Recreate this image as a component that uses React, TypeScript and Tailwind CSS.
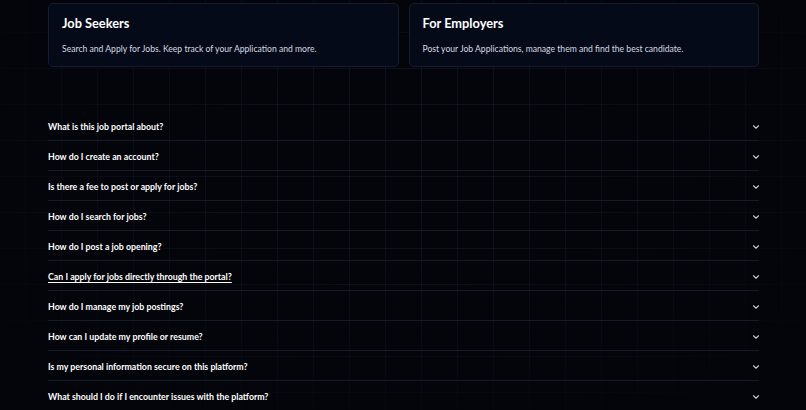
import React from "react";

const faqs = [
  "What is this job portal about?",
  "How do I create an account?",
  "Is there a fee to post or apply for jobs?",
  "How do I search for jobs?",
  "How do I post a job opening?",
  "Can I apply for jobs directly through the portal?",
  "How do I manage my job postings?",
  "How can I update my profile or resume?",
  "Is my personal information secure on this platform?",
  "What should I do if I encounter issues with the platform?",
];

function Chevron() {
  return (
    <svg width="10" height="10" viewBox="0 0 24 24" fill="none" stroke="currentColor" strokeWidth="2.6" strokeLinecap="round" strokeLinejoin="round">
      <path d="m6 9 6 6 6-6" />
    </svg>
  );
}

export default function App() {
  return (
    <div
      className="relative w-[806px] h-[410px] overflow-hidden bg-[#04050b] text-white"
      style={{ fontFamily: 'Lato, "Noto Sans", sans-serif' }}
    >
      {/* grid backdrop */}
      <div className="absolute inset-0 bg-[linear-gradient(to_right,rgba(70,90,140,0.14)_1px,transparent_1px),linear-gradient(to_bottom,rgba(70,90,140,0.14)_1px,transparent_1px)] bg-[size:36px_36px] bg-[position:-11px_-4px]" />
      <div className="absolute inset-0 bg-[radial-gradient(ellipse_at_50%_40%,transparent_25%,#04050b_90%)]" />

      <div className="relative ml-[48px] w-[711px] pt-[3px]">
        <div className="grid grid-cols-2 gap-[10px]">
          <div className="h-[64px] rounded-[5px] border border-[#151c30] bg-[#050a19] px-[13px] pt-[11px]">
            <h3 className="text-[12.8px] font-bold leading-[16px]">Job Seekers</h3>
            <p className="mt-[12px] text-[8.6px] leading-[12px] text-[#d5d9e2]">
              Search and Apply for Jobs. Keep track of your Application and more.
            </p>
          </div>
          <div className="h-[64px] rounded-[5px] border border-[#151c30] bg-[#050a19] px-[13px] pt-[11px]">
            <h3 className="text-[12.8px] font-bold leading-[16px]">For Employers</h3>
            <p className="mt-[12px] text-[8.6px] leading-[12px] text-[#d5d9e2]">
              Post your Job Applications, manage them and find the best candidate.
            </p>
          </div>
        </div>

        <div className="mt-[44px]">
          {faqs.map((q, i) => (
            <div
              key={i}
              className="flex h-[30px] items-center justify-between border-b border-[#161b2a] pt-[2px]"
            >
              <span className={`text-[8.8px] font-bold ${i === 5 ? "underline underline-offset-2" : ""}`}>{q}</span>
              <span className="mr-[-2px] text-[#c8ccd6]">
                <Chevron />
              </span>
            </div>
          ))}
        </div>
      </div>
    </div>
  );
}
